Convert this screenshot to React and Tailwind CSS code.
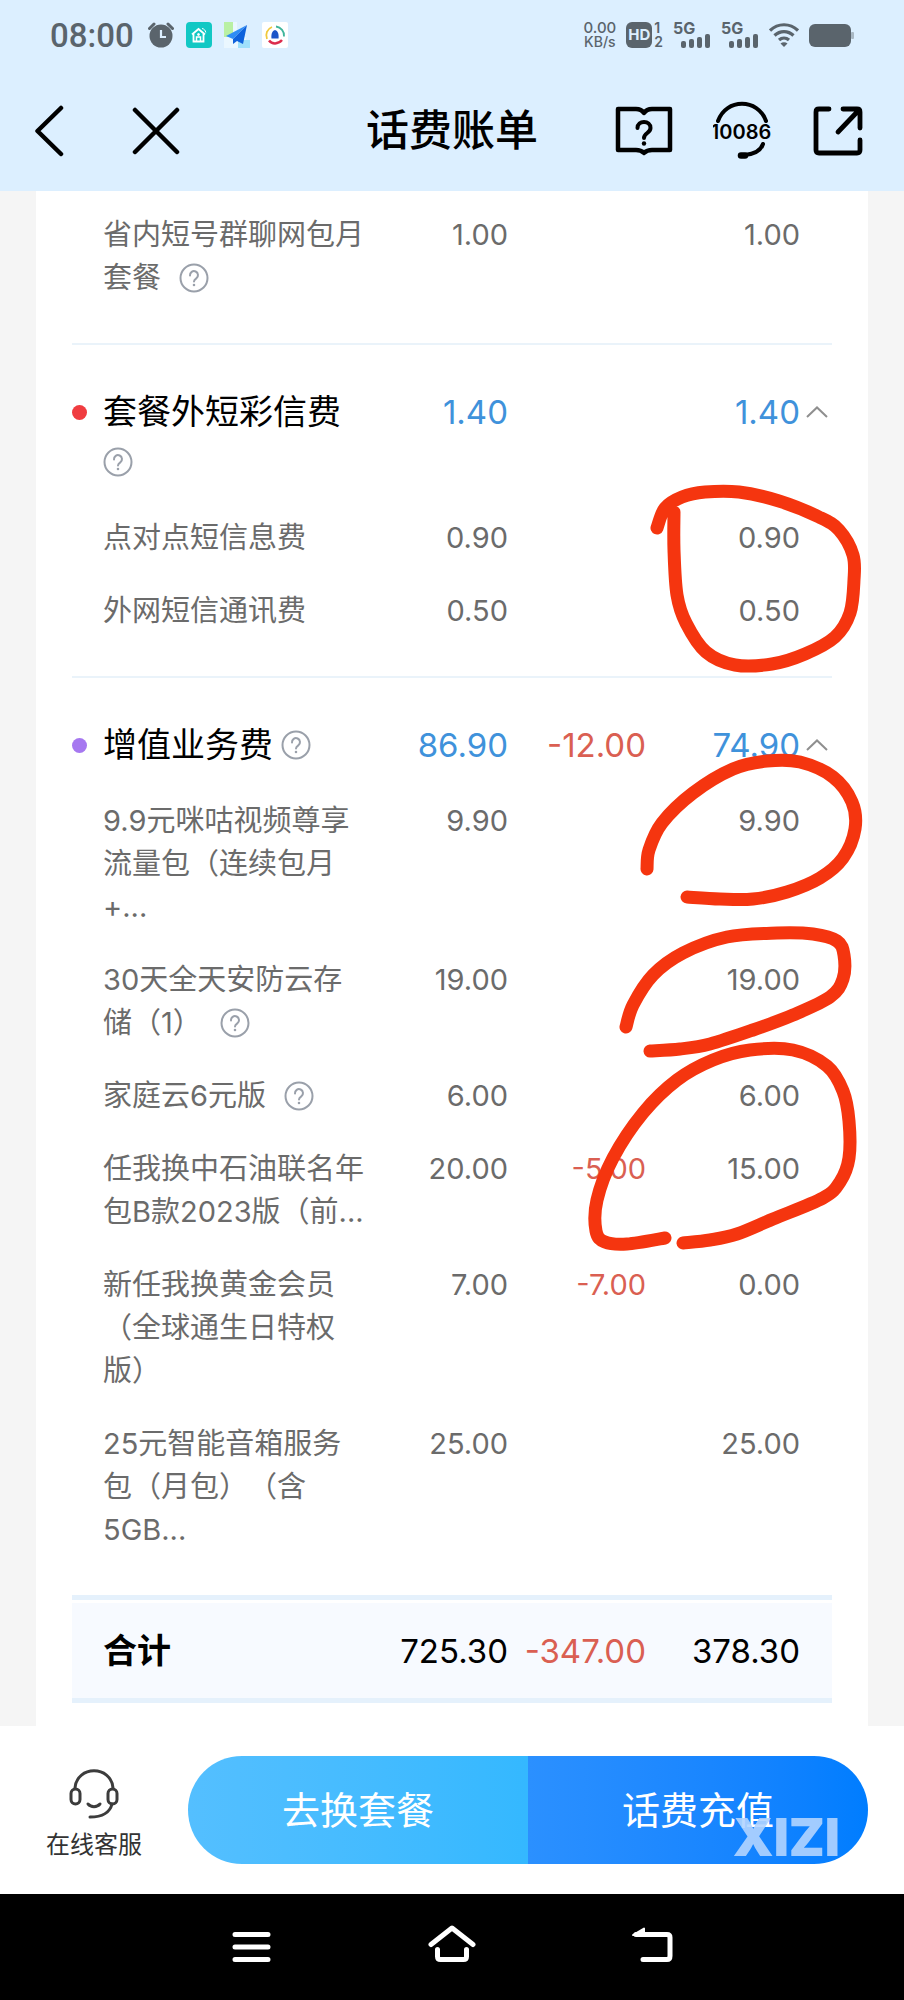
import React, { useState } from "react";

const SECTIONS = [
  {
    id: "package",
    items: [{ name: "省内短号群聊网包月套餐", help: true, fee: "1.00", total: "1.00" }]
  },
  {
    id: "sms",
    title: "套餐外短彩信费",
    dot: "bg-[#f03c40]",
    fee: "1.40",
    total: "1.40",
    items: [
      { name: "点对点短信息费", fee: "0.90", total: "0.90" },
      { name: "外网短信通讯费", fee: "0.50", total: "0.50" }
    ]
  },
  {
    id: "vas",
    title: "增值业务费",
    dot: "bg-[#a678f0]",
    fee: "86.90",
    discount: "-12.00",
    total: "74.90",
    items: [
      { name: "9.9元咪咕视频尊享流量包（连续包月+...", fee: "9.90", total: "9.90" },
      { name: "30天全天安防云存储（1）", help: true, fee: "19.00", total: "19.00" },
      { name: "家庭云6元版", help: true, fee: "6.00", total: "6.00" },
      { name: "任我换中石油联名年包B款2023版（前...", fee: "20.00", discount: "-5.00", total: "15.00" },
      { name: "新任我换黄金会员（全球通生日特权版）", fee: "7.00", discount: "-7.00", total: "0.00" },
      { name: "25元智能音箱服务包（月包）（含5GB...", fee: "25.00", total: "25.00" }
    ]
  }
];

// freehand pen marks, as points along each stroke
const MARKS = [
  [[657, 528], [665, 508], [682, 497], [705, 492], [739, 492], [779, 501], [819, 517], [839, 530], [853, 555], [854, 580], [850, 613], [835, 637], [805, 654], [772, 664], [735, 665], [706, 652], [686, 623], [677, 595], [674, 550], [674, 512]],
  [[647, 869], [649, 850], [662, 823], [693, 793], [733, 769], [767, 761], [800, 762], [833, 777], [852, 802], [855, 829], [843, 858], [820, 878], [787, 892], [753, 899], [720, 899], [687, 897]],
  [[626, 1027], [633, 1005], [653, 975], [683, 953], [727, 937], [777, 933], [813, 934], [837, 941], [844, 955], [843, 979], [830, 997], [793, 1015], [753, 1030], [710, 1044], [680, 1049], [650, 1051]],
  [[665, 1238], [627, 1244], [605, 1242], [596, 1231], [597, 1200], [613, 1158], [643, 1113], [677, 1080], [713, 1060], [750, 1050], [793, 1050], [827, 1066], [843, 1091], [849, 1121], [849, 1158], [840, 1182], [823, 1198], [773, 1219], [737, 1234], [710, 1240], [683, 1243]]
];

function smoothPath(pts) {
  let d = `M${pts[0][0]} ${pts[0][1]}`;
  for (let i = 0; i < pts.length - 1; i++) {
    const p0 = pts[i - 1] || pts[i];
    const p1 = pts[i];
    const p2 = pts[i + 1];
    const p3 = pts[i + 2] || p2;
    d += ` C${p1[0] + (p2[0] - p0[0]) / 6} ${p1[1] + (p2[1] - p0[1]) / 6}`;
    d += ` ${p2[0] - (p3[0] - p1[0]) / 6} ${p2[1] - (p3[1] - p1[1]) / 6}`;
    d += ` ${p2[0]} ${p2[1]}`;
  }
  return d;
}

function HelpButton({ className }) {
  return (
    <button type="button" aria-label="说明" className={`inline-flex align-middle ${className || ""}`}>
      <svg className="size-[30px]" viewBox="0 0 30 30" fill="none" stroke="#9aa0aa" strokeWidth="2">
        <circle cx="15" cy="15" r="13.500" />
        <path d="M11 12.500a4 4 0 1 1 6.300 2.900c-1.600 1.100-2.300 1.600-2.300 3.100" strokeLinecap="round" />
        <circle cx="15" cy="22" r="0.6" fill="#9aa0aa" stroke="#9aa0aa" strokeWidth="1.400" />
      </svg>
    </button>
  );
}

function Signal() {
  return (
    <div className="flex w-[38px] flex-col">
      <span className="font-['Inter'] text-base leading-3 font-bold">5G</span>
      <svg className="ml-2 h-[14px] w-[30px]" viewBox="0 0 30 14" fill="currentColor">
        <rect x="0" y="7" width="5" height="7" rx="2" />
        <rect x="8" y="5" width="5" height="9" rx="2" />
        <rect x="16" y="3" width="5" height="11" rx="2" />
        <rect x="24" y="0" width="5" height="14" rx="2" />
      </svg>
    </div>
  );
}

function StatusBar() {
  return (
    <div className="flex h-[70px] items-center justify-between px-[50px] text-[#5a646c]">
      <div className="flex items-center gap-3">
        <span className="pr-0.5 font-['Roboto'] text-[33px] leading-none font-medium">08:00</span>
        {/* alarm */}
        <svg className="size-[26px]" viewBox="0 0 26 26">
          <circle cx="13" cy="14" r="11.500" fill="currentColor" />
          <path d="M1.500 6.500 6 2M24.500 6.500 20 2" stroke="currentColor" strokeWidth="3" strokeLinecap="round" />
          <path d="M13 8v7h5" fill="none" stroke="#dcefff" strokeWidth="2.200" />
        </svg>
        {/* home app */}
        <svg className="size-[26px]" viewBox="0 0 26 26" fill="none" stroke="#fff">
          <rect width="26" height="26" rx="4" fill="#12c8c4" stroke="none" />
          <path d="M6 12.500 12.500 7l6.500 5.500M7.500 12v7.500h10V12" strokeWidth="1.800" />
          <path d="M10.500 19v-4h4v4" strokeWidth="1.500" />
          <circle cx="12.500" cy="12.500" r="1" fill="#fff" />
          <path d="M16 6.500c2 .3 3.500 1.800 3.800 4" strokeWidth="1" />
        </svg>
        {/* paper plane */}
        <svg className="size-[26px]" viewBox="0 0 26 26">
          <path d="M0 0h13v15h9v3H14v8H0z" fill="#eaf7ff" />
          <path d="M0 0h9v15H0z" fill="#b9f0a4" />
          <path d="M14 18h12v8H14z" fill="#9fe0fb" />
          <path d="M23 3 2 14l7 3z" fill="#2f8df5" />
          <path d="M23 3 9 17v5l4-3 6 3z" fill="#0f62dc" />
        </svg>
        {/* carrier app */}
        <svg className="size-[26px]" viewBox="0 0 26 26" fill="none" strokeWidth="1.800">
          <rect width="26" height="26" rx="2" fill="#fff" />
          <path d="M10 5a9 9 0 0 0-5 12" stroke="#f0c93c" />
          <path d="M14 4.500a9 9 0 0 1 8 10" stroke="#3fb59b" />
          <path d="M7 18.500c3 4 9 4 13-.500" stroke="#dc2c4c" strokeWidth="2.500" />
          <path d="M13 8c3 1 4 4 3.500 8.500h-7C9 12 10 9 13 8z" fill="#1c55c8" />
        </svg>
      </div>
      <div className="flex items-center gap-[10px]">
        <div className="flex flex-col items-center font-['Inter'] text-sm leading-[14px] font-medium">
          <span className="text-[15px]">0.00</span>
          <span>KB/s</span>
        </div>
        <div className="flex items-center gap-0.5 font-['Inter']">
          <span className="flex size-[26px] items-center justify-center rounded-md bg-[#5a646c] text-[15px] font-bold text-[#dcefff]">HD</span>
          <span className="flex flex-col text-sm leading-[14px] font-semibold">
            <span>1</span>
            <span>2</span>
          </span>
        </div>
        <Signal />
        <Signal />
        {/* wifi */}
        <svg className="h-[26px] w-[30px]" viewBox="0 0 30 26" fill="none" stroke="currentColor" strokeWidth="3.200">
          <path d="M1 8.500C9 .8 21 .8 29 8.500" />
          <path d="M5.500 13.500c5.500-5.300 13.500-5.300 19 0" />
          <path d="M10 18c3-2.700 7-2.700 10 0" />
          <path d="M11.500 21.500 15 25l3.500-3.500c-2-1.700-5-1.700-7 0z" fill="currentColor" stroke="none" />
        </svg>
        {/* battery */}
        <svg className="h-6 w-[45px]" viewBox="0 0 45 24">
          <rect x="0" y="1" width="42" height="23" rx="6" fill="currentColor" />
          <rect x="42" y="9" width="3" height="7" rx="1" fill="#a9b8c4" />
        </svg>
      </div>
    </div>
  );
}

function TitleBar() {
  return (
    <div className="grid h-[121px] grid-cols-[1fr_auto_1fr] items-center text-black">
      <div className="flex items-center gap-[68px] pl-[34px]">
        <button type="button" aria-label="返回">
          <svg className="h-[52px] w-[30px]" viewBox="0 0 30 52" fill="none" stroke="currentColor" strokeWidth="4.500" strokeLinecap="round" strokeLinejoin="round">
            <path d="M27 3 3.500 26 27 49" />
          </svg>
        </button>
        <button type="button" aria-label="关闭">
          <svg className="size-12" viewBox="0 0 48 48" stroke="currentColor" strokeWidth="4.500" strokeLinecap="round">
            <path d="M3 3 45 45M45 3 3 45" />
          </svg>
        </button>
      </div>
      <h1 className="text-[43px] leading-none font-medium">话费账单</h1>
      <div className="flex items-center justify-end gap-10 pr-[41px]">
        <button type="button" aria-label="帮助">
          <svg className="h-[50px] w-[58px]" viewBox="0 0 58 50" fill="none" stroke="currentColor" strokeWidth="4.500" strokeLinejoin="round">
            <path d="M3 3h18c4 0 6 1 8 4 2-3 4-4 8-4h18v41H37c-3 0-6 1-8 3-2-2-5-3-8-3H3z" />
            <path d="M22.500 22c0-4 3-6 6.500-6s6.500 2 6.500 6c0 5-6.500 5-6.500 10" strokeWidth="4" strokeLinecap="round" />
            <circle cx="29" cy="37.500" r="2.200" fill="currentColor" stroke="none" />
          </svg>
        </button>
        <button type="button" aria-label="10086 客服">
          <svg className="size-[60px]" viewBox="0 0 60 60" fill="none" stroke="currentColor" strokeWidth="4" strokeLinecap="round">
            <path d="M5 20C13-3 45-3 53 20" />
            <path d="M50 43c-2 6-7 10-18 11" />
            <path d="M28 54.500h4" strokeWidth="6.500" />
            <text x="28" y="38" textAnchor="middle" fill="currentColor" stroke="none" className="font-['Inter'] text-[20px] font-semibold">10086</text>
          </svg>
        </button>
        <button type="button" aria-label="分享">
          <svg className="size-[50px]" viewBox="0 0 50 50" fill="none" stroke="currentColor" strokeWidth="4.800" strokeLinecap="round" strokeLinejoin="round">
            <path d="M16 3H6c-2 0-3 1-3 3v38c0 2 1 3 3 3h38c2 0 3-1 3-3V34" />
            <path d="M30 3h14c2 0 3 1 3 3v16M46 4 25 26" />
          </svg>
        </button>
      </div>
    </div>
  );
}

function BillSection({ section, last }) {
  const [open, setOpen] = useState(true);
  const { title, dot, fee, discount, total, items } = section;
  const divider = last
    ? "pb-11 border-b-[5px] border-[#e5f1fc]"
    : "pb-11 border-b-2 border-[#eaf3fa]";

  return (
    <tbody>
      {title && (
        <tr className="text-[33px] leading-[50px] text-[#3f92db]">
          <th scope="row" className="pt-[42px] pb-[14px] text-left align-top text-[34px] font-normal text-black">
            <div className="flex">
              <span className="flex h-[50px] w-[31px] shrink-0 items-center">
                <span className={`size-[15px] rounded-full ${dot}`} />
              </span>
              <span className="flex flex-1 flex-wrap items-center gap-x-2">
                {title}
                <span className="flex h-[50px] items-center">
                  <HelpButton />
                </span>
              </span>
            </div>
          </th>
          <td className="pt-[42px] pb-[14px] text-right align-top">{fee}</td>
          <td className="pt-[42px] pb-[14px] text-right align-top text-[#da5f52]">{discount}</td>
          <td className="pt-[42px] pb-[14px] align-top">
            <div className="flex items-center justify-end">
              {total}
              <button type="button" aria-label="收起" aria-expanded={open} onClick={() => setOpen(!open)} className="flex w-8 justify-end pr-1">
                <svg className="h-3 w-[22px]" viewBox="0 0 22 12" fill="none" stroke="#8f8f8f" strokeWidth="2">
                  <path d={open ? "M1 11 11 1.500 21 11" : "M1 1 11 10.500 21 1"} />
                </svg>
              </button>
            </div>
          </td>
        </tr>
      )}
      {open && items.map((item, i) => {
        const pad = i === items.length - 1 ? divider : "pb-[15px]";
        return (
          <tr key={item.name} className="text-[29px] leading-[43px] text-[#6b6b6b]">
            <th scope="row" className={`pt-[15px] pl-[31px] text-left align-top font-normal ${pad}`}>
              {item.name}
              {item.help && <HelpButton className="-mt-1 ml-[18px]" />}
            </th>
            <td className={`pt-[15px] text-right align-top ${pad}`}>{item.fee}</td>
            <td className={`pt-[15px] text-right align-top text-[#da5f52] ${pad}`}>{item.discount}</td>
            <td className={`pt-[15px] pr-8 text-right align-top ${pad}`}>{item.total}</td>
          </tr>
        );
      })}
    </tbody>
  );
}

function BillTable() {
  const sumCell = "h-[103px] border-t-[3px] border-b-[5px] border-t-white border-b-[#e5f1fc] bg-[#f7faff] bg-clip-padding";
  return (
    <table className="w-full table-fixed border-separate border-spacing-0">
      <colgroup>
        <col />
        <col className="w-[140px]" />
        <col className="w-[138px]" />
        <col className="w-[186px]" />
      </colgroup>
      {SECTIONS.map((s, i) => (
        <BillSection key={s.id} section={s} last={i === SECTIONS.length - 1} />
      ))}
      <tfoot>
        <tr className="text-[33px] leading-[50px] text-black">
          <th scope="row" className={`pl-[31px] text-left text-[34px] font-bold ${sumCell}`}>合计</th>
          <td className={`text-right ${sumCell}`}>725.30</td>
          <td className={`text-right text-[#da5f52] ${sumCell}`}>-347.00</td>
          <td className={`pr-8 text-right ${sumCell}`}>378.30</td>
        </tr>
      </tfoot>
    </table>
  );
}

function ActionBar() {
  return (
    <div className="flex items-center gap-[46px] bg-white py-[30px] pr-9 pl-[46px]">
      <a href="#service" className="flex flex-col items-center gap-2 pt-3 text-2xl leading-9 text-[#333]">
        <svg className="size-[50px]" viewBox="0 0 50 50" fill="none" stroke="#3c3c3c" strokeWidth="3" strokeLinecap="round">
          <path d="M6 19C8-4 42-4 44 19" />
          <rect x="2" y="20" width="9" height="15" rx="4.500" />
          <rect x="39" y="20" width="9" height="15" rx="4.500" />
          <path d="M43 35c-2 8-9 13-22 13" />
          <path d="M19 35c3 3.500 9 3.500 12 0" />
        </svg>
        在线客服
      </a>
      <div className="relative flex flex-1 text-[38px] text-white">
        <button type="button" className="h-[108px] flex-1 rounded-l-full bg-linear-to-r from-[#54bfff] to-[#34b8ff]">去换套餐</button>
        <button type="button" className="h-[108px] flex-1 rounded-r-full bg-linear-to-r from-[#2b90ff] to-[#007dff]">话费充值</button>
        <span className="pointer-events-none absolute right-7 bottom-0 font-['Inter'] text-[52px] leading-none font-black text-[#b3d4ff]/90">XIZI</span>
      </div>
    </div>
  );
}

function SystemNav() {
  return (
    <nav className="flex h-[106px] items-center justify-center gap-38 bg-black text-white">
      <button type="button" aria-label="最近任务">
        <svg className="size-12" viewBox="0 0 48 48" stroke="currentColor" strokeWidth="5" strokeLinecap="round">
          <path d="M7 11.500h33M7 24h33M7 36.500h33" />
        </svg>
      </button>
      <button type="button" aria-label="主屏幕">
        <svg className="size-12" viewBox="0 0 48 48" fill="none" stroke="currentColor" strokeWidth="5" strokeLinecap="round" strokeLinejoin="round">
          <path d="M3 21.500 24 5l21 16.500" />
          <path d="M9.500 26.500V33.500c0 2 1 3 3 3h23c2 0 3-1 3-3v-7" />
        </svg>
      </button>
      <button type="button" aria-label="返回上一页">
        <svg className="size-12" viewBox="0 0 48 48" fill="none" stroke="currentColor" strokeWidth="5" strokeLinecap="round" strokeLinejoin="round">
          <path d="M8 11.500h31c2 0 3 1 3 3V33c0 2-1 3.500-3 3.500H15" />
          <path d="M5 12 16 5.500v6z" fill="currentColor" strokeWidth="2" />
        </svg>
      </button>
    </nav>
  );
}

export default function App() {
  return (
    <div className="relative min-h-screen bg-[#f5f5f5] font-['Inter','Noto_Sans_CJK_SC',sans-serif] [text-spacing-trim:space-all]">
      <header className="bg-[#dcefff]">
        <StatusBar />
        <TitleBar />
      </header>
      <main className="mx-9 bg-white px-9 pt-[7px] pb-[23px]">
        <BillTable />
      </main>
      <ActionBar />
      <SystemNav />
      <svg className="pointer-events-none absolute inset-0 size-full" viewBox="0 0 904 2000" preserveAspectRatio="xMaxYMin meet" fill="none" stroke="#f5350f" strokeWidth="13" strokeLinecap="round" strokeLinejoin="round">
        {MARKS.map((pts, i) => (
          <path key={i} d={smoothPath(pts)} />
        ))}
      </svg>
    </div>
  );
}
